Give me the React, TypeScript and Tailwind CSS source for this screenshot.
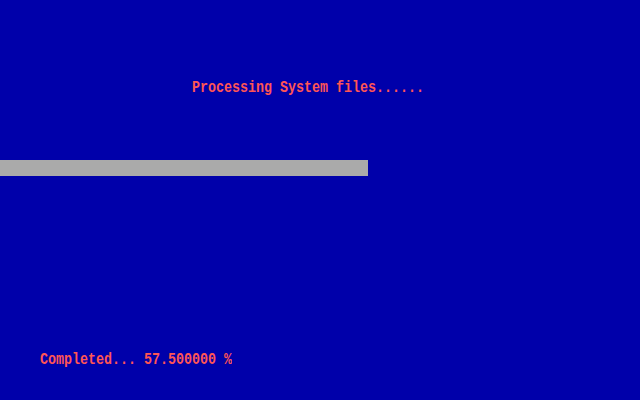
export default function App() {
  const percent = 57.5;
  return (
    <div
      className="w-[640px] h-[400px] bg-[#0000aa] flex flex-col text-[#ff5555] overflow-hidden"
      style={{ fontFamily: '"Liberation Mono", "DejaVu Sans Mono", monospace' }}
    >
      <p className="mt-[80px] pl-[192px] h-[16px] text-[13.33px] leading-[16px] font-bold whitespace-pre origin-left scale-y-[1.3]">
        Processing System files......
      </p>
      <div className="mt-[64px] h-[16px] w-[368px] bg-[#aaaaaa]" />
      <p className="mt-[176px] pl-[40px] h-[16px] text-[13.33px] leading-[16px] font-bold whitespace-pre origin-left scale-y-[1.3]">
        Completed... {percent.toFixed(6)} %
      </p>
    </div>
  );
}
